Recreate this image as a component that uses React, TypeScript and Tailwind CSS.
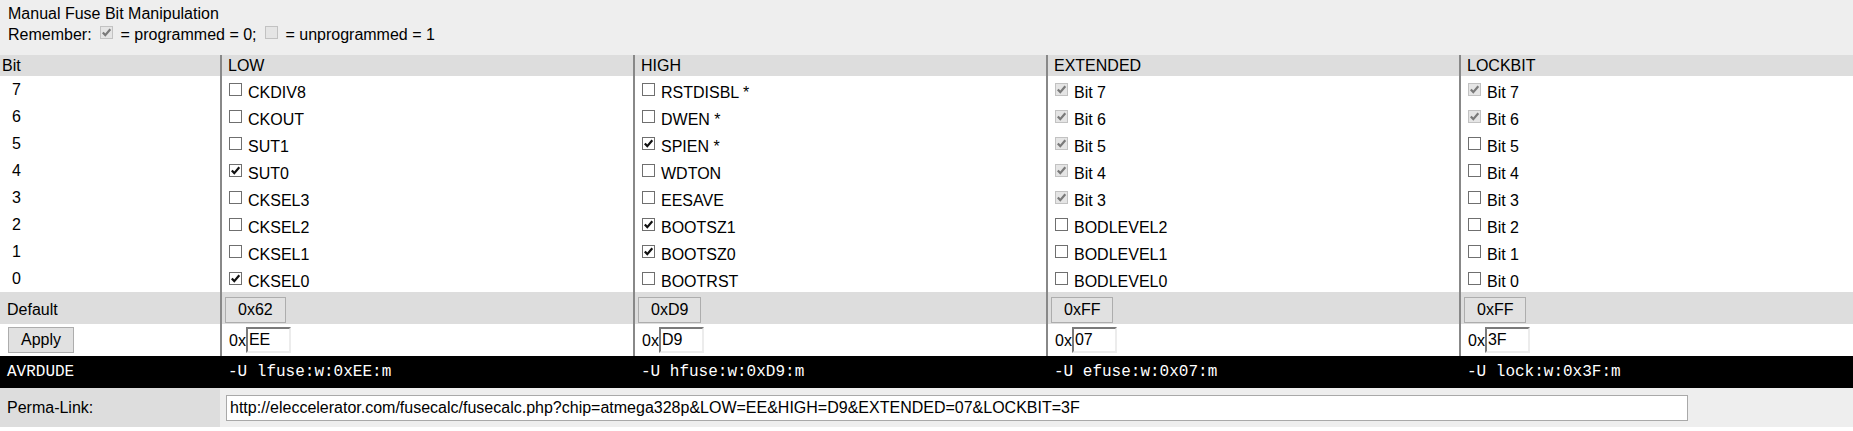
type Kind = 'off' | 'on' | 'dimOn' | 'dimOff';

const LOW: [string, Kind][] = [
  ['CKDIV8', 'off'],
  ['CKOUT', 'off'],
  ['SUT1', 'off'],
  ['SUT0', 'on'],
  ['CKSEL3', 'off'],
  ['CKSEL2', 'off'],
  ['CKSEL1', 'off'],
  ['CKSEL0', 'on'],
];

const HIGH: [string, Kind][] = [
  ['RSTDISBL *', 'off'],
  ['DWEN *', 'off'],
  ['SPIEN *', 'on'],
  ['WDTON', 'off'],
  ['EESAVE', 'off'],
  ['BOOTSZ1', 'on'],
  ['BOOTSZ0', 'on'],
  ['BOOTRST', 'off'],
];

const EXTENDED: [string, Kind][] = [
  ['Bit 7', 'dimOn'],
  ['Bit 6', 'dimOn'],
  ['Bit 5', 'dimOn'],
  ['Bit 4', 'dimOn'],
  ['Bit 3', 'dimOn'],
  ['BODLEVEL2', 'off'],
  ['BODLEVEL1', 'off'],
  ['BODLEVEL0', 'off'],
];

const LOCKBIT: [string, Kind][] = [
  ['Bit 7', 'dimOn'],
  ['Bit 6', 'dimOn'],
  ['Bit 5', 'off'],
  ['Bit 4', 'off'],
  ['Bit 3', 'off'],
  ['Bit 2', 'off'],
  ['Bit 1', 'off'],
  ['Bit 0', 'off'],
];

const FUSES = [
  { name: 'LOW', bits: LOW, def: '0x62', value: 'EE', cmd: '-U lfuse:w:0xEE:m' },
  { name: 'HIGH', bits: HIGH, def: '0xD9', value: 'D9', cmd: '-U hfuse:w:0xD9:m' },
  { name: 'EXTENDED', bits: EXTENDED, def: '0xFF', value: '07', cmd: '-U efuse:w:0x07:m' },
  { name: 'LOCKBIT', bits: LOCKBIT, def: '0xFF', value: '3F', cmd: '-U lock:w:0x3F:m' },
];

const PERMA =
  'http://eleccelerator.com/fusecalc/fusecalc.php?chip=atmega328p&LOW=EE&HIGH=D9&EXTENDED=07&LOCKBIT=3F';

function Box({ kind, className = '' }: { kind: Kind; className?: string }) {
  const dim = kind === 'dimOn' || kind === 'dimOff';
  const checked = kind === 'on' || kind === 'dimOn';
  return (
    <span
      className={`inline-block h-[13px] w-[13px] shrink-0 border ${
        dim ? 'border-[#c2c2c2] bg-[#e5e5e5]' : 'border-[#6f6f6f] bg-white'
      } ${className}`}
    >
      {checked && (
        <svg viewBox="0 0 11 11" className="block h-[11px] w-[11px]">
          <path
            d="M1.8 5.4 L4.3 8.1 L9.3 2.2"
            fill="none"
            stroke={dim ? '#7a7a7a' : '#111111'}
            strokeWidth="2.2"
          />
        </svg>
      )}
    </span>
  );
}

function Btn({ children, className = '' }: { children: React.ReactNode; className?: string }) {
  return (
    <button
      type="button"
      className={`h-[26px] border border-[#adadad] bg-[#e1e1e1] px-[12px] leading-[18px] text-black ${className}`}
    >
      {children}
    </button>
  );
}

export default function App() {
  return (
    <div className="w-[1853px] bg-white font-['Liberation_Sans',Arial,sans-serif] text-[16px] text-black">
      {/* heading */}
      <div className="h-[55px] bg-[#eeeeee] pl-[8px] pt-[5px]">
        <div className="leading-[18px]">Manual Fuse Bit Manipulation</div>
        <div className="mt-[3px] leading-[18px]">
          Remember: <Box kind="dimOn" className="mb-[1px] ml-[4px] mr-[3px]" /> = programmed = 0;{' '}
          <Box kind="dimOff" className="mb-[1px] ml-[4px] mr-[3px]" /> = unprogrammed = 1
        </div>
      </div>

      <div className="grid grid-cols-[220px_413px_413px_413px_1fr]">
        {/* header */}
        <div className="h-[21px] bg-[#dddddd] pl-[2px] pt-[1px] leading-[20px]">Bit</div>
        {FUSES.map((f) => (
          <div
            key={f.name}
            className="h-[21px] border-l-2 border-[#888888] bg-[#dddddd] pl-[6px] pt-[1px] leading-[20px]"
          >
            {f.name}
          </div>
        ))}

        {/* bit rows */}
        {[0, 1, 2, 3, 4, 5, 6, 7].map((i) => (
          <div key={i} className="contents">
            <div className="h-[27px] pl-[12px] pt-[5px] leading-[18px]">{7 - i}</div>
            {FUSES.map((f) => (
              <div
                key={f.name}
                className="flex h-[27px] items-start border-l-2 border-[#888888] pl-[7px] pt-[7px]"
              >
                <Box kind={f.bits[i][1]} />
                <span className="ml-[6px] mt-[1px] leading-[18px]">{f.bits[i][0]}</span>
              </div>
            ))}
          </div>
        ))}

        {/* defaults */}
        <div className="h-[32px] bg-[#dddddd] pl-[7px] pt-[9px] leading-[18px]">Default</div>
        {FUSES.map((f) => (
          <div key={f.name} className="h-[32px] border-l-2 border-[#888888] bg-[#dddddd] pl-[3px] pt-[5px]">
            <Btn>{f.def}</Btn>
          </div>
        ))}

        {/* apply */}
        <div className="h-[32px] pl-[8px] pt-[3px]">
          <Btn>Apply</Btn>
        </div>
        {FUSES.map((f) => (
          <div key={f.name} className="flex h-[32px] items-start border-l-2 border-[#888888] pl-[7px]">
            <span className="mt-[8px] leading-[18px]">0x</span>
            <input
              readOnly
              value={f.value}
              className="mt-[3px] h-[26px] w-[45px] border-2 border-b-[#ececec] border-l-[#7a7a7a] border-r-[#ececec] border-t-[#7a7a7a] bg-white px-px leading-[18px] outline-none"
            />
          </div>
        ))}

        {/* avrdude */}
        <div className="flex h-[32px] items-center bg-black pl-[7px] font-['Liberation_Mono','Courier_New',monospace] leading-[18px] text-white">
          AVRDUDE
        </div>
        {FUSES.map((f) => (
          <div
            key={f.name}
            className="flex h-[32px] items-center border-l-2 border-black bg-black pl-[6px] font-['Liberation_Mono','Courier_New',monospace] leading-[18px] whitespace-pre text-white"
          >
            {f.cmd}
          </div>
        ))}

        {/* perma link */}
        <div className="flex h-[39px] items-center bg-[#dddddd] pl-[7px] leading-[18px]">Perma-Link:</div>
        <div className="col-span-4 flex h-[39px] items-center bg-[#eeeeee] pl-[6px]">
          <input
            readOnly
            value={PERMA}
            className="h-[26px] w-[1462px] border border-[#a9a9a9] bg-white px-[3px] leading-[18px] outline-none"
          />
        </div>
      </div>
    </div>
  );
}
